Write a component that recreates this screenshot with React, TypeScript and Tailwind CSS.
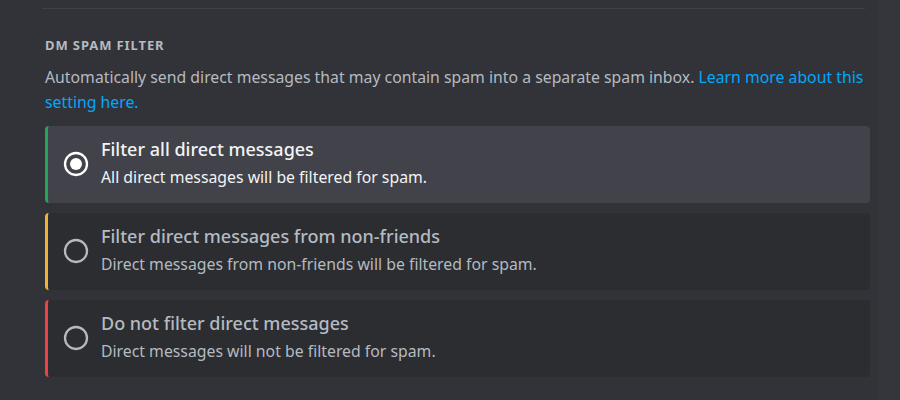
import React from "react";

type Opt = { title: string; desc: string; color: string; selected: boolean };

const opts: Opt[] = [
  { title: "Filter all direct messages", desc: "All direct messages will be filtered for spam.", color: "border-l-[#23a55a]", selected: true },
  { title: "Filter direct messages from non-friends", desc: "Direct messages from non-friends will be filtered for spam.", color: "border-l-[#f0b232]", selected: false },
  { title: "Do not filter direct messages", desc: "Direct messages will not be filtered for spam.", color: "border-l-[#f23f43]", selected: false },
];

function Radio({ selected }: { selected: boolean }) {
  return (
    <svg width="26" height="26" viewBox="0 0 26 26" className="shrink-0 -mt-[2px]">
      <circle cx="13" cy="13" r="11" fill="none" stroke={selected ? "#ffffff" : "#b5bac1"} strokeWidth="2.3" />
      {selected && <circle cx="13" cy="13" r="6" fill="#ffffff" />}
    </svg>
  );
}

export default function App() {
  return (
    <div className="w-[900px] h-[400px] bg-[#313338] overflow-hidden flex" style={{ fontFamily: '"Noto Sans", "Open Sans", sans-serif' }}>
      <div className="w-[870px] pl-[45px] flex flex-col">
        <div className="h-[8px]" />
        <div className="h-px bg-[#3f4147] mr-[5px] -ml-[3px]" />
        <div className="mt-[27px] text-[13px] font-bold tracking-[0.9px] text-[#b5bac1] leading-[18px]">DM SPAM FILTER</div>
        <p className="mt-[11px] text-[15.8px] leading-[25px] text-[#b5bac1] pr-[4px]">
          Automatically send direct messages that may contain spam into a separate spam inbox.{" "}
          <span className="text-[#00a8fc]">Learn more about this setting here.</span>
        </p>
        <div className="mt-[11px] flex flex-col gap-[10px]">
          {opts.map((o, i) => (
            <div
              key={i}
              className={`h-[77px] rounded-[4px] border-l-[3px] ${o.color} ${o.selected ? "bg-[#41424a]" : "bg-[#2b2d31]"} flex items-center pl-[15px] gap-[12px]`}
            >
              <Radio selected={o.selected} />
              <div className="flex flex-col gap-[4px] pb-[4px]">
                <div className={`text-[18px] leading-[24px] font-medium ${o.selected ? "text-[#f2f3f5]" : "text-[#b5bac1]"}`}>{o.title}</div>
                <div className={`text-[15.8px] leading-[24px] ${o.selected ? "text-[#f2f3f5]" : "text-[#b5bac1]"}`}>{o.desc}</div>
              </div>
            </div>
          ))}
        </div>
      </div>
      <div className="flex-1 bg-[#34363b] ml-[8px]" />
    </div>
  );
}
